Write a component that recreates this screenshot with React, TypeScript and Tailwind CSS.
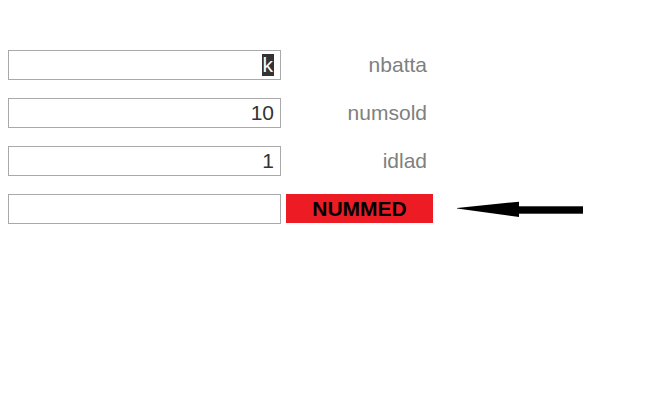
import React from "react";

const rows = [
  { value: "k", label: "nbatta", selected: true },
  { value: "10", label: "numsold" },
  { value: "1", label: "idlad" },
];

function Field({ value, selected }: { value: string; selected?: boolean }) {
  return (
    <div className="flex h-[30px] w-[273px] items-center justify-end border border-[#a9a9a9] bg-white pr-[6px] text-[21px] text-[#333]">
      {selected ? (
        <span className="bg-[#333] px-px leading-[22px] text-white">{value}</span>
      ) : (
        <span>{value}</span>
      )}
    </div>
  );
}

function Arrow() {
  return (
    <svg width="126" height="17" viewBox="0 0 126 17" className="ml-[19px]">
      <polygon points="0,7 62,0.7 62,16 0,7.6" fill="#000" />
      <rect x="61" y="5.3" width="65" height="7.4" fill="#000" />
    </svg>
  );
}

export default function App() {
  return (
    <div className="min-h-[414px] bg-white pl-2 pt-[50px] font-['Liberation_Sans',Arial,sans-serif]">
      <div className="flex flex-col gap-[18px]">
        {rows.map((r) => (
          <div key={r.label} className="flex h-[30px] items-center gap-[5px]">
            <Field value={r.value} selected={r.selected} />
            <div className="w-[147px] pr-[6px] text-right text-[21px] text-[#808080]">
              {r.label}
            </div>
          </div>
        ))}
        <div className="flex h-[30px] items-center gap-[5px]">
          <Field value="" />
          <div className="flex h-[29px] w-[147px] items-center justify-center self-start bg-[#ed1c24] text-[21px] font-bold text-black">
            NUMMED
          </div>
          <Arrow />
        </div>
      </div>
    </div>
  );
}
